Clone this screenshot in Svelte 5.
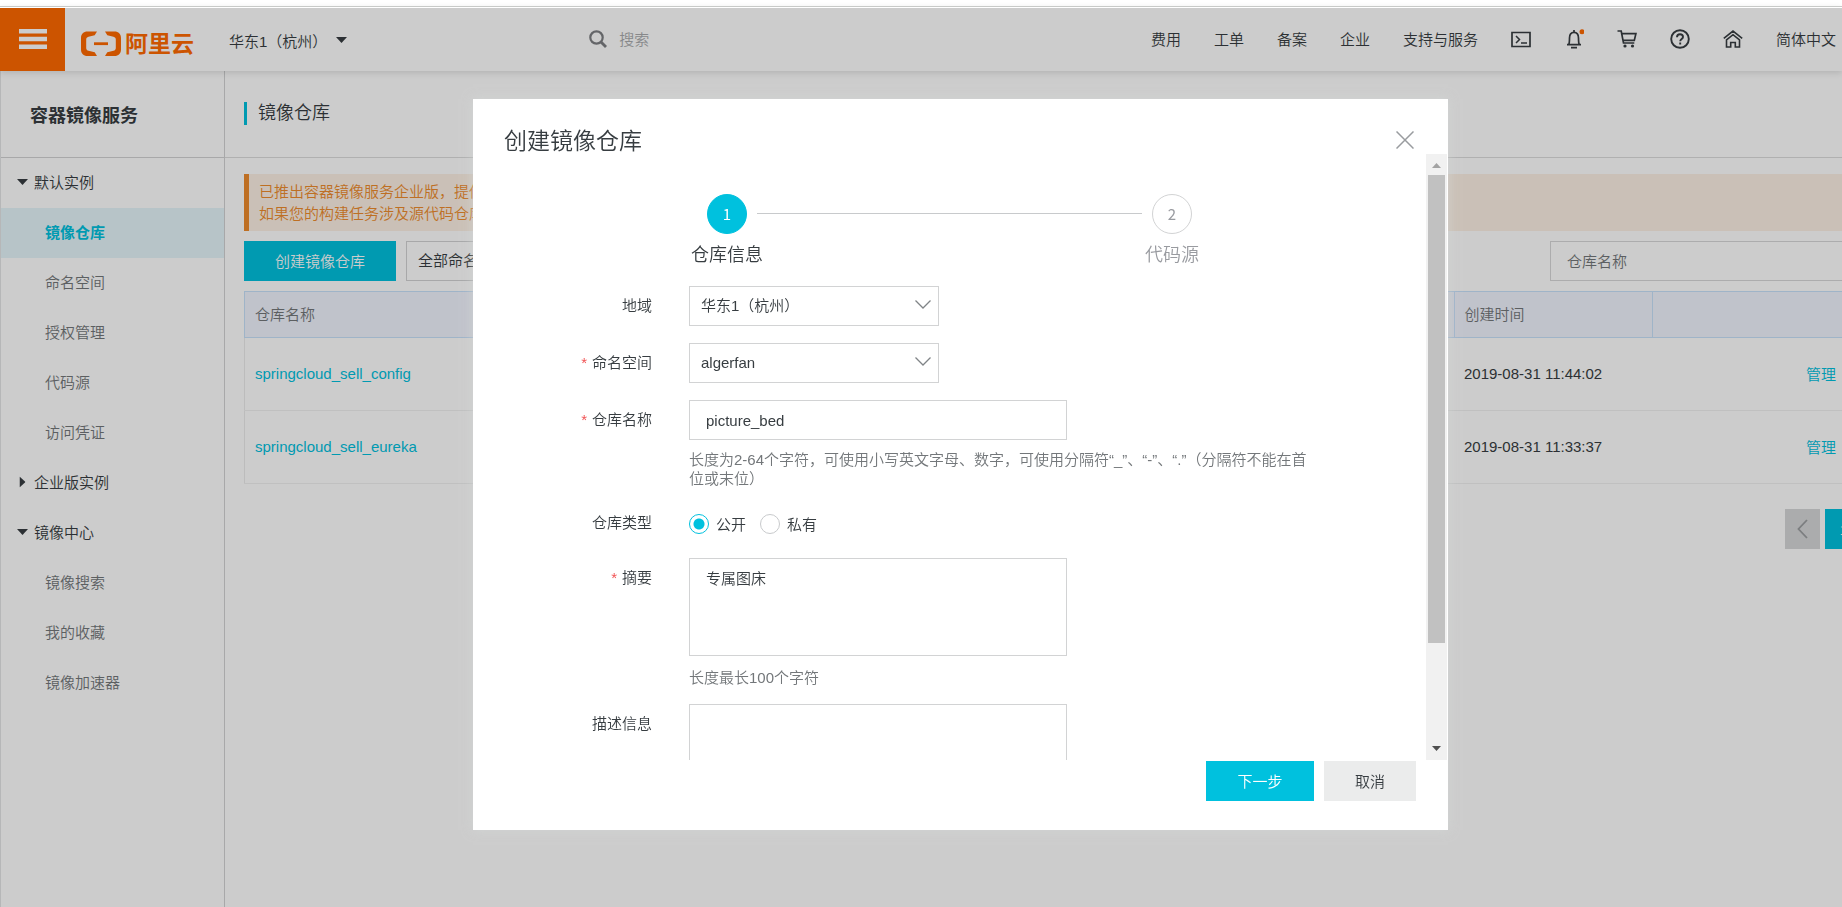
<script lang="ts">
  interface MenuGroup {
    title: string;
    open: boolean;
    items: string[];
  }

  interface Repo {
    name: string;
    created: string;
  }

  const navLinks = ['费用', '工单', '备案', '企业', '支持与服务'];

  let groups: MenuGroup[] = $state([
    { title: '默认实例', open: true, items: ['镜像仓库', '命名空间', '授权管理', '代码源', '访问凭证'] },
    { title: '企业版实例', open: false, items: [] },
    { title: '镜像中心', open: true, items: ['镜像搜索', '我的收藏', '镜像加速器'] }
  ]);

  const repos: Repo[] = [
    { name: 'springcloud_sell_config', created: '2019-08-31 11:44:02' },
    { name: 'springcloud_sell_eureka', created: '2019-08-31 11:33:37' }
  ];

  let active = $state('镜像仓库');
  let showDialog = $state(true);
  let repoName = $state('picture_bed');
  let repoType = $state('public');
  let summary = $state('专属图床');
  let description = $state('');
</script>

{#snippet chevron()}
  <svg class="chevron" width="16" height="9" viewBox="0 0 16 9" fill="none" stroke="#808487" stroke-width="1.3"><path d="M.5.5 8 8 15.5.5" /></svg>
{/snippet}

<div class="page">
  <header class="topbar">
    <button class="burger" aria-label="菜单">
      <svg width="28" height="20" viewBox="0 0 28 20" fill="#fff"><path d="M0 0h28v4.5H0zM0 7.7h28v4.5H0zM0 15.4h28v4.5H0z" /></svg>
    </button>
    <a class="logo" href="#home">
      <svg width="42" height="26" viewBox="0 0 42 26" fill="#ff6a00">
        <path d="M17 .5H7.500C3.500.5 1 3 1 7v11.500c0 4 2.500 6.500 6.500 6.500H17l-2.300-3.700-6.200-1.500C7 19.400 6.200 18.500 6.200 17V8.500C6.200 7 7 6.100 8.500 5.700l6.200-1.500z" />
        <path d="M25 .5h9.500c4 0 6.500 2.500 6.500 6.500v11.500c0 4-2.500 6.500-6.500 6.500H25l2.300-3.700 6.200-1.500c1.500-.4 2.300-1.300 2.300-2.800V8.500c0-1.500-.8-2.400-2.300-2.800l-6.200-1.500z" />
        <path d="M14 11.300h14v2.800H14z" />
      </svg>
      <span>阿里云</span>
    </a>
    <button class="region">
      华东1（杭州）
      <svg width="11" height="6" viewBox="0 0 11 6" fill="#373d41"><path d="M0 0h11L5.500 6z" /></svg>
    </button>
    <label class="search">
      <svg width="18" height="18" viewBox="0 0 18 18" fill="none" stroke="#7d7f82" stroke-width="2.200"><circle cx="7.500" cy="7.500" r="6.200" /><path d="m12 12 5 5" stroke-width="2.800" /></svg>
      <input type="search" placeholder="搜索" aria-label="搜索" />
    </label>
    <nav class="top-nav">
      {#each navLinks as link}
        <a href="#{link}">{link}</a>
      {/each}
      <a href="#shell" aria-label="Cloud Shell">
        <svg width="20" height="20" viewBox="0 0 20 20" fill="none" stroke="#373d41" stroke-width="1.700"><path d="M1 3.500h18v14H1z" /><path d="m5 7 3.500 3.500L5 14M10 14h6" stroke-width="1.500" /></svg>
      </a>
      <a href="#message" aria-label="消息">
        <svg width="20" height="20" viewBox="0 0 20 20" fill="none" stroke="#373d41" stroke-width="1.700"><path d="M3 15.700h14M4.700 15.500c.8-1.300.8-3 .8-6.500 0-3.500 1.700-5.700 4.500-5.700s4.500 2.200 4.500 5.700c0 3.500 0 5.200.8 6.500" /><path d="M10 1v2M7 18.700h6" /><circle cx="18" cy="2.800" r="2.500" fill="#ff6a00" stroke="none" /></svg>
      </a>
      <a href="#cart" aria-label="购物车">
        <svg width="20" height="20" viewBox="0 0 20 20" fill="none" stroke="#373d41" stroke-width="1.700"><path d="M.5 2h3.700l2.300 12h10.800M4.700 4.700h14.200l-1.600 6.700H6" /><g fill="#373d41" stroke="none"><circle cx="8" cy="17" r="1.600" /><circle cx="15.500" cy="17" r="1.600" /></g></svg>
      </a>
      <a href="#help" aria-label="帮助">
        <svg width="20" height="20" viewBox="0 0 20 20" fill="none" stroke="#373d41" stroke-width="1.900"><circle cx="10" cy="10" r="8.800" /><path d="M7 8.200C7 6.300 8.300 5.200 10 5.200s3 1 3 2.700c0 2.100-2.800 2-2.800 4.400M10.200 13.600v2" /></svg>
      </a>
      <a href="#overview" aria-label="主页">
        <svg width="20" height="20" viewBox="0 0 20 20" fill="none" stroke="#373d41" stroke-width="1.600"><path d="M.8 9.300 10 2l9.200 7.300M3.500 11v7h4.200v-4.500h4.600V18h4.200v-7L10 5.700z" /></svg>
      </a>
      <a href="#lang">简体中文</a>
    </nav>
  </header>

  <div class="layout">
    <aside class="sidebar">
      <h1>容器镜像服务</h1>
      {#each groups as group}
        <button class="group" class:open={group.open} aria-expanded={group.open} onclick={() => (group.open = !group.open)}>
          <span class="caret"><svg width="11" height="6" viewBox="0 0 11 6" fill="#373d41"><path d="M0 0h11L5.500 6z" /></svg></span>
          {group.title}
        </button>
        {#if group.open}
          {#each group.items as item}
            <a class="item" class:active={item === active} href="#{item}" onclick={() => (active = item)}>{item}</a>
          {/each}
        {/if}
      {/each}
    </aside>

    <main>
      <div class="page-head"><h2>镜像仓库</h2></div>
      <div class="content">
        <div class="notice">
          <p>已推出容器镜像服务企业版，提供</p>
          <p>如果您的构建任务涉及源代码仓库</p>
        </div>

        <div class="toolbar">
          <button class="btn primary create" onclick={() => (showDialog = true)}>创建镜像仓库</button>
          <div class="select filter">
            <select aria-label="命名空间筛选"><option>全部命名空间</option></select>
            {@render chevron()}
          </div>
          <input class="query" type="text" placeholder="仓库名称" aria-label="搜索仓库名称" />
        </div>

        <table>
          <thead>
            <tr>
              <th>仓库名称</th>
              <th class="created">创建时间</th>
              <th class="ops"></th>
            </tr>
          </thead>
          <tbody>
            {#each repos as repo}
              <tr>
                <td><a href="#{repo.name}">{repo.name}</a></td>
                <td>{repo.created}</td>
                <td class="ops"><a href="#manage">管理</a></td>
              </tr>
            {/each}
          </tbody>
        </table>

        <div class="pager">
          <button class="prev" aria-label="上一页">
            <svg width="11" height="20" viewBox="0 0 11 20" fill="none" stroke="#9b9ea0" stroke-width="1.800"><path d="M10 1 1.500 10l8.500 9" /></svg>
          </button>
          <button class="current">1</button>
        </div>
      </div>
    </main>
  </div>
</div>

{#if showDialog}
  <div class="mask">
    <div class="dialog" role="dialog" aria-labelledby="dialog-title">
      <div class="dialog-head">
        <h3 id="dialog-title">创建镜像仓库</h3>
        <button class="close" aria-label="关闭" onclick={() => (showDialog = false)}>
          <svg width="18" height="18" viewBox="0 0 18 18" fill="none" stroke="#999c9f" stroke-width="1.500"><path d="m.5.5 17 17M17.500.5l-17 17" /></svg>
        </button>
      </div>

      <div class="dialog-body">
        <div class="scroll-area">
          <ol class="steps">
            <li class="current"><span class="num">1</span><span class="step-name">仓库信息</span></li>
            <li class="line" aria-hidden="true"></li>
            <li><span class="num">2</span><span class="step-name">代码源</span></li>
          </ol>

          <form>
            <div class="row">
              <label for="region">地域</label>
              <div class="select">
                <select id="region"><option>华东1（杭州）</option></select>
                {@render chevron()}
              </div>
            </div>
            <div class="row">
              <label class="required" for="namespace">命名空间</label>
              <div class="select">
                <select id="namespace"><option>algerfan</option></select>
                {@render chevron()}
              </div>
            </div>
            <div class="row">
              <label class="required" for="name">仓库名称</label>
              <div class="control">
                <input id="name" class="text" type="text" bind:value={repoName} />
                <p class="hint">长度为2-64个字符，可使用小写英文字母、数字，可使用分隔符“_”、“-”、“.”（分隔符不能在首位或末位）</p>
              </div>
            </div>
            <div class="row type-row">
              <span class="row-label" id="type-label">仓库类型</span>
              <div class="radios" role="radiogroup" aria-labelledby="type-label">
                <label><input type="radio" value="public" bind:group={repoType} />公开</label>
                <label><input type="radio" value="private" bind:group={repoType} />私有</label>
              </div>
            </div>
            <div class="row">
              <label class="required" for="summary">摘要</label>
              <div class="control">
                <textarea id="summary" bind:value={summary}></textarea>
                <p class="hint">长度最长100个字符</p>
              </div>
            </div>
            <div class="row">
              <label for="description">描述信息</label>
              <div class="control">
                <textarea id="description" bind:value={description}></textarea>
              </div>
            </div>
          </form>
        </div>

        <div class="scrollbar" aria-hidden="true">
          <svg width="9" height="5" viewBox="0 0 9 5" fill="#a3a3a3"><path d="M0 5h9L4.500 0z" /></svg>
          <div class="track"><div class="thumb"></div></div>
          <svg width="9" height="5" viewBox="0 0 9 5" fill="#505050"><path d="M0 0h9L4.500 5z" /></svg>
        </div>
      </div>

      <div class="dialog-foot">
        <button class="btn primary next">下一步</button>
        <button class="btn" onclick={() => (showDialog = false)}>取消</button>
      </div>
    </div>
  </div>
{/if}

<style>
  :global(body) {
    overflow: hidden;
    background: #fff;
    color: #373d41;
    font-family: 'Liberation Sans', 'Noto Sans CJK SC', sans-serif;
    font-size: 15px;
    font-weight: 350;
    text-spacing-trim: space-all;
  }

  * {
    box-sizing: border-box;
  }

  h1, h2, h3, p, ol {
    margin: 0;
    padding: 0;
    font-weight: inherit;
  }

  button, input, select, textarea {
    margin: 0;
    font: inherit;
    color: inherit;
    border-radius: 0;
    outline: none;
  }

  button {
    padding: 0;
    border: none;
    background: none;
    cursor: pointer;
  }

  a {
    color: #00c1de;
    text-decoration: none;
  }

  svg {
    display: block;
    flex: none;
  }

  .page {
    display: flex;
    flex-direction: column;
    height: 100vh;
    padding-top: 6px;
  }

  /* Top bar */
  .topbar {
    position: relative;
    display: flex;
    align-items: center;
    flex: none;
    height: 65px;
    padding-top: 1px;
    border-top: 1px solid #c8cac8;
    box-shadow: 0 2px 6px rgba(0, 0, 0, 0.12);
  }

  .burger {
    display: flex;
    align-items: center;
    justify-content: center;
    width: 65px;
    height: 63px;
    padding-bottom: 2px;
    background: #ff6a00;
  }

  .logo {
    display: flex;
    align-items: center;
    gap: 3px;
    margin: 8px 0 0 15px;
    color: #ff6a00;
    font-size: 23px;
    line-height: 26px;
    font-weight: 700;
  }

  .region {
    display: flex;
    align-items: center;
    gap: 9px;
    margin-left: 35px;
    padding-top: 1px;
  }

  .search {
    display: flex;
    align-items: center;
    gap: 12px;
    margin-left: 242px;
    padding-bottom: 1px;
  }

  .search input {
    width: 200px;
    padding: 0;
    border: none;
    background: none;
  }

  .search input::placeholder {
    color: #a9abad;
  }

  .top-nav {
    display: flex;
    align-items: center;
    gap: 33px;
    margin-left: auto;
    padding: 0 6px 2px 0;
    white-space: nowrap;
  }

  .top-nav a {
    color: #373d41;
  }

  .layout {
    display: flex;
    flex: 1;
    min-height: 0;
  }

  /* Sidebar */
  .sidebar {
    flex: none;
    width: 225px;
    border-left: 1px solid #e4e5e6;
    border-right: 1px solid #d2d3d4;
  }

  .sidebar h1 {
    height: 87px;
    padding: 10px 0 0 29px;
    border-bottom: 1px solid #d2d3d4;
    font-size: 18px;
    font-weight: 700;
    line-height: 70px;
  }

  .group {
    display: flex;
    align-items: center;
    gap: 6px;
    width: 100%;
    height: 50px;
    padding: 0 0 4px 15px;
  }

  .caret {
    display: flex;
    justify-content: center;
    width: 12px;
    padding-top: 2px;
  }

  .group:not(.open) .caret svg {
    transform: rotate(-90deg);
  }

  .item {
    display: flex;
    align-items: center;
    height: 50px;
    padding: 0 0 4px 44px;
    color: #73777a;
  }

  .item.active {
    background: #e5f6fa;
    color: #00c1de;
    font-weight: 700;
  }

  /* Main content */
  main {
    flex: 1;
    min-width: 0;
    overflow: hidden;
  }

  .page-head {
    height: 87px;
    padding: 31px 0 0 19px;
    border-bottom: 1px solid #dcdddd;
  }

  .page-head h2 {
    padding-left: 11px;
    border-left: 3px solid #00c1de;
    font-size: 18px;
    line-height: 23px;
  }

  .content {
    display: flex;
    flex-direction: column;
    gap: 10px;
    padding: 16px 0 0 19px;
  }

  .notice {
    padding: 7px 10px 6px;
    border-left: 5px solid #ee8b2c;
    background: #fdf1e5;
    color: #ee8b2c;
    line-height: 22px;
    white-space: nowrap;
  }

  .toolbar {
    display: flex;
    gap: 10px;
  }

  .btn {
    height: 40px;
    padding: 0 31px 2px;
    background: #ebecec;
  }

  .btn.primary {
    background: #00c1de;
    color: #fff;
  }

  .query {
    width: 292px;
    height: 40px;
    margin-left: auto;
    padding: 0 16px;
    border: 1px solid #d7d8d9;
    border-right: none;
    background: #fff;
  }

  .query::placeholder {
    color: #73777a;
  }

  table {
    width: 100%;
    border-collapse: collapse;
    table-layout: fixed;
  }

  th, td {
    padding: 0 10px 2px;
    text-align: left;
    font-weight: inherit;
  }

  th {
    height: 46px;
    border: 1px solid #c7e1fb;
    border-right: none;
    background: #f1f4fe;
    color: #73777a;
  }

  td {
    height: 73px;
    border-bottom: 1px solid #f0f1f1;
  }

  td:first-child {
    border-left: 1px solid #ebecec;
  }

  .created {
    width: 198px;
  }

  .ops {
    width: 190px;
    padding-right: 6px;
    text-align: right;
  }

  .pager {
    display: flex;
    justify-content: flex-end;
    gap: 5px;
    margin: 15px -21px 0 0;
  }

  .pager button {
    display: flex;
    align-items: center;
    justify-content: center;
    width: 35px;
    height: 40px;
    background: #d6d7d9;
  }

  .pager .current {
    width: 38px;
    background: #00c1de;
    color: #fff;
  }

  /* Form controls */
  .select {
    position: relative;
    width: 250px;
  }

  .select select {
    width: 100%;
    height: 40px;
    padding: 0 11px 2px;
    border: 1px solid #d2d3d4;
    background: #fff;
    appearance: none;
  }

  .select .chevron {
    position: absolute;
    top: 14px;
    right: 8px;
    pointer-events: none;
  }

  .text, textarea {
    display: block;
    width: 378px;
    border: 1px solid #d2d3d4;
    background: #fff;
  }

  .text {
    height: 40px;
    padding: 0 16px;
  }

  textarea {
    height: 98px;
    margin-bottom: 2px;
    padding: 10px 16px;
    line-height: 20px;
    resize: none;
  }

  /* Dialog */
  .mask {
    position: fixed;
    inset: 8px 0 0;
    display: flex;
    align-items: flex-start;
    justify-content: center;
    padding: 91px 0 0 79px;
    background: rgba(0, 0, 0, 0.2);
  }

  .dialog {
    display: flex;
    flex-direction: column;
    width: 975px;
    max-width: 100%;
    max-height: calc(100vh - 176px);
    padding-bottom: 29px;
    background: #fff;
    box-shadow: 0 0 10px rgba(212, 217, 215, 0.7);
  }

  .dialog-head {
    display: flex;
    align-items: flex-start;
    justify-content: space-between;
    height: 55px;
    padding: 29px 34px 0 31px;
  }

  .dialog-head h3 {
    font-size: 23px;
    line-height: 26px;
  }

  .close {
    padding-top: 3px;
  }

  .dialog-body {
    display: flex;
    flex: 1;
    min-height: 0;
    padding-right: 1px;
  }

  .scroll-area {
    flex: 1;
    overflow-y: auto;
    scrollbar-width: none;
  }

  .scrollbar {
    display: flex;
    flex-direction: column;
    align-items: center;
    justify-content: space-between;
    width: 21px;
    padding: 9px 2px;
    background: #f1f1f1;
  }

  .track {
    flex: 1;
    width: 100%;
    margin: 7px 0;
  }

  .thumb {
    height: 83%;
    background: #c1c1c1;
  }

  .steps {
    display: flex;
    gap: 10px;
    padding: 40px 0 0 234px;
    list-style: none;
  }

  .steps li:not(.line) {
    display: flex;
    flex-direction: column;
    align-items: center;
    gap: 10px;
    width: 40px;
    color: #999ba0;
  }

  .steps .line {
    width: 385px;
    height: 20px;
    border-bottom: 1px solid #c8cacc;
  }

  .num {
    display: flex;
    align-items: center;
    justify-content: center;
    width: 40px;
    height: 40px;
    padding-bottom: 2px;
    border: 1px solid #d2d3d4;
    border-radius: 50%;
    font-family: 'Noto Sans CJK SC', sans-serif;
    font-weight: 400;
  }

  .step-name {
    font-size: 18px;
    line-height: 22px;
    white-space: nowrap;
  }

  .steps .current .num {
    border-color: #00c1de;
    background: #00c1de;
    color: #fff;
  }

  .steps .current .step-name {
    color: #373d41;
  }

  form {
    display: flex;
    flex-direction: column;
    gap: 17px;
    margin-top: 20px;
    height: 610px;
  }

  .row {
    display: flex;
    gap: 37px;
  }

  .row > label, .row-label {
    flex: none;
    width: 179px;
    line-height: 40px;
    text-align: right;
  }

  .required::before {
    content: '*';
    margin-right: 5px;
    color: #f15354;
  }

  .control {
    width: 626px;
  }

  .hint {
    padding-top: 10px;
    color: #73777a;
    line-height: 19px;
  }

  .type-row {
    align-items: center;
    height: 36px;
  }

  .radios {
    display: flex;
    gap: 14px;
    padding-top: 1px;
  }

  .radios label {
    display: flex;
    align-items: center;
    gap: 7px;
  }

  .radios input {
    width: 20px;
    height: 20px;
    border: 1px solid #c8cacc;
    border-radius: 50%;
    background: #fff;
    appearance: none;
  }

  .radios input:checked {
    border-color: #00c1de;
    background: radial-gradient(circle, #00c1de 5px, #fff 6px);
  }

  .next {
    width: 108px;
  }

  .dialog-foot {
    display: flex;
    justify-content: flex-end;
    gap: 10px;
    padding: 1px 32px 0 0;
  }
</style>
